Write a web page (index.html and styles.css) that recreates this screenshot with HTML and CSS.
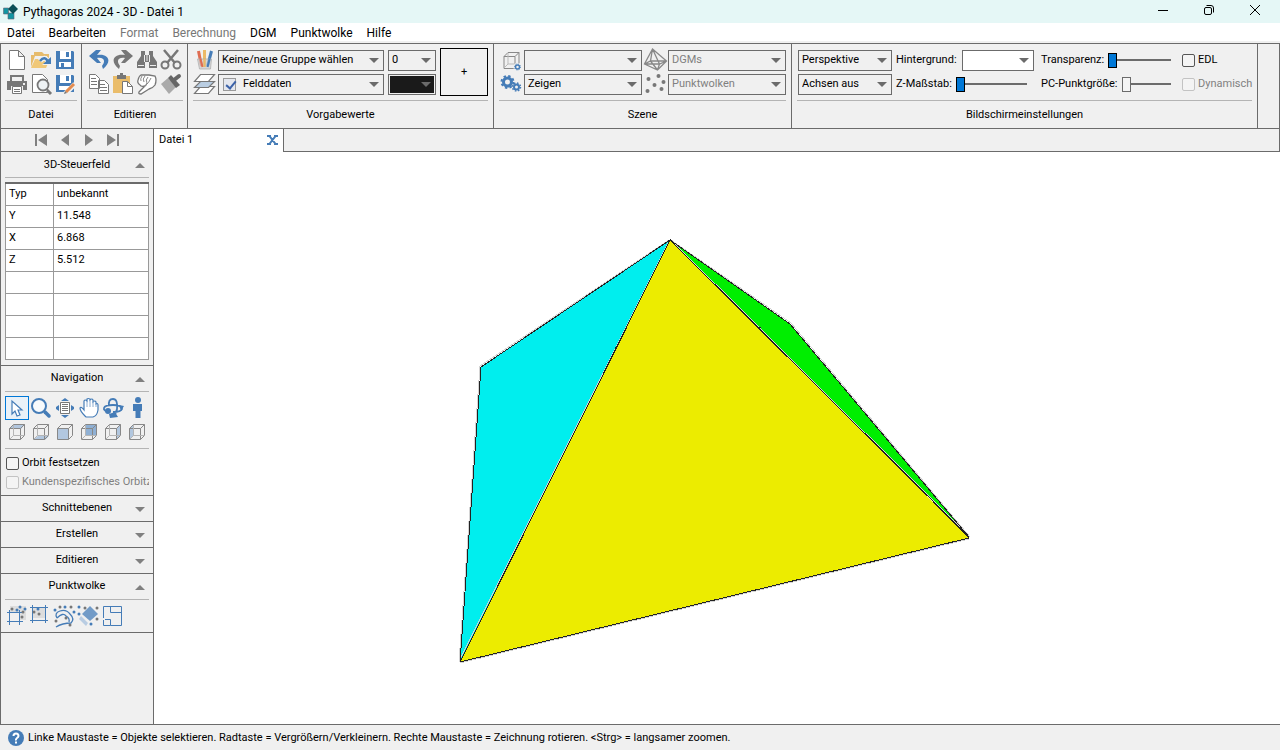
FILE: index.html
```html
<!DOCTYPE html>
<html lang="de">
<head>
<meta charset="utf-8">
<title>Pythagoras 2024 - 3D - Datei 1</title>
<link rel="stylesheet" href="styles.css">
</head>
<body>
<header class="titlebar">
  <svg class="logo" width="16" height="18" viewBox="0 0 16 18"><path fill="#1295a2" stroke="#667" stroke-width=".6" d="M.5 5h5v6h-5zM5 10h6v6H5z"/><path fill="#0a4f57" d="M10 1l5 5-5 5-5-5z"/></svg>
  <h1>Pythagoras 2024 - 3D - Datei 1</h1>
  <div class="winbtns">
    <button aria-label="Minimieren"><svg width="12" height="12" viewBox="0 0 12 12"><path d="M1 6.500h10"/></svg></button>
    <button aria-label="Wiederherstellen"><svg width="12" height="12" viewBox="0 0 12 12"><rect x="1.500" y="3.500" width="7" height="7" rx="1.500"/><path d="M3.500 1.500h4.500q2.500 0 2.500 2.500v4.500"/></svg></button>
    <button aria-label="Schließen"><svg width="12" height="12" viewBox="0 0 12 12"><path d="M1 1l10 10M11 1L1 11"/></svg></button>
  </div>
</header>
<nav class="menu">
  <button>Datei</button><button>Bearbeiten</button><button disabled>Format</button><button disabled>Berechnung</button><button>DGM</button><button>Punktwolke</button><button>Hilfe</button>
</nav>

<section class="ribbon">
  <div class="group">
    <div class="tools three">
      <button aria-label="Neu"><svg viewBox="0 0 24 24"><path fill="#fff" stroke="#777" d="M4.500 2.500h9l6 6v13h-15zM13.500 2.500v6h6"/></svg></button>
      <button aria-label="Öffnen"><svg viewBox="0 0 24 24"><path fill="#e6bb6c" d="M2 19V7h3V4h8l2 2h5v5h-2V8H6z"/><path fill="#f0c878" d="M6 11h15l-4 9H2z"/><path fill="none" stroke="#f0f0f0" stroke-width="5" d="M11 13q5-6 8 1"/><path fill="#f0f0f0" d="M13 17h10V9z"/><path fill="none" stroke="#457cb7" stroke-width="2.500" d="M11 13q5-6 8 1"/><path fill="#457cb7" d="M14 16h8V9z"/></svg></button>
      <button aria-label="Speichern"><svg viewBox="0 0 24 24"><path fill="#457cb7" d="M3 3h17l1 1v17H3z"/><path fill="#fff" d="M7 3h11v8H7zM6 14h12v5H6z"/><path fill="#457cb7" d="M13 4h3v5h-3zM8 15h3v4H8z"/></svg></button>
      <button aria-label="Drucken"><svg viewBox="0 0 24 24"><path fill="#777" d="M5 3h14v6H5zM2 9h20v9h-4v-4H6v4H2z"/><path fill="#fff" stroke="#777" d="M7.500 14.500h9v7h-9z"/><path stroke="#777" d="M9 17.500h6M9 19.500h6"/><path fill="#f0f0f0" d="M7 5h10v4H7zM18 11h2v2h-2z"/></svg></button>
      <button aria-label="Seitenansicht"><svg viewBox="0 0 24 24"><path fill="#fff" stroke="#777" d="M3.500 2.500h10l5 5v13h-15z"/><circle cx="14" cy="13" r="5.500" fill="#eef2f4" stroke="#777" stroke-width="1.800"/><path stroke="#777" stroke-width="3" d="M18 18l4 4"/></svg></button>
      <button aria-label="Speichern unter"><svg viewBox="0 0 24 24"><path fill="#457cb7" d="M3 3h17l1 1v16H3z"/><path fill="#fff" d="M7 3h11v8H7zM6 14h12v4H6z"/><path fill="#457cb7" d="M13 4h3v5h-3z"/><path stroke="#f0f0f0" stroke-width="5" d="M12 22l10-10"/><path stroke="#e38b4f" stroke-width="3" d="M13 20l8-8"/><path fill="#777" d="M11 22l1-3 2 2z"/></svg></button>
    </div>
    <h2>Datei</h2>
  </div>
  <div class="group">
    <div class="tools four">
      <button aria-label="Rückgängig"><svg viewBox="0 0 24 24"><path fill="#457cb7" d="M14 2h-5L2 8l8 7h4l-4-5c7-1 9 3 5 8l1 3c10-8 5-16-6-14z"/></svg></button>
      <button aria-label="Wiederherstellen"><svg viewBox="0 0 24 24"><path fill="#777" d="M10 2h5l7 6-8 7h-4l4-5c-7-1-9 3-5 8l-1 3C-2 13 3 5 14 7z"/></svg></button>
      <button aria-label="Suchen"><svg viewBox="0 0 24 24"><path fill="#777" d="M6 3h4v4h4V3h4v5l4 6v6h-8v-6h-4v6H2v-6l4-6z"/><path stroke="#eee" d="M3 17.500h6M15 17.500h6M12 7v6M9.500 7v7M14.500 7v7"/></svg></button>
      <button aria-label="Ausschneiden"><svg viewBox="0 0 24 24"><g fill="none" stroke="#777" stroke-width="2"><circle cx="6" cy="17" r="3.500"/><circle cx="18" cy="17" r="3.500"/><path stroke-width="2.500" d="M5 2l11 13M19 2L8 15"/></g></svg></button>
      <button aria-label="Kopieren"><svg viewBox="0 0 24 24"><path fill="#fff" stroke="#777" d="M2.500 2.500h6l4 4v10h-10zM11.500 8.500h6l4 4v9h-10z"/><path stroke="#777" d="M4 6.500h5M4 9.500h6M4 12.500h6M13 12.500h5M13 15.500h7M13 18.500h7"/></svg></button>
      <button aria-label="Einfügen"><svg viewBox="0 0 24 24"><path fill="#eabd6b" d="M2 4h17v17H2z"/><path fill="#777" d="M6 3h9v4H6zM9 1h3v3H9z"/><path fill="#fff" stroke="#777" d="M11.500 9.500h5l5 5v7h-10z"/><path fill="none" stroke="#777" d="M16.500 9.500v5h5"/></svg></button>
      <button aria-label="Auswählen"><svg viewBox="0 0 24 24"><path fill="#fff" stroke="#777" stroke-width="1.300" d="M6 3h8l6 1q2 4 0 9-2 3-6 4l-8 5q-3 0-2-2l6-6q-4 1-5-1-3-2-2-5 1-4 3-5z"/><path fill="none" stroke="#888" d="M7 4q-2 3-1 5M10 4q-3 3-1 6M13 5q-3 3-1 6l-2 3M16 6q-2 5-6 8"/></svg></button>
      <button aria-label="Format übertragen"><svg viewBox="0 0 24 24"><path fill="#aaa" d="M2 12l7-6 8 9-7 7z"/><path fill="#666" d="M9 6l3-3 9 10-4 3z"/><path stroke="#666" stroke-width="4" stroke-linecap="round" d="M15 8l5-4"/></svg></button>
    </div>
    <h2>Editieren</h2>
  </div>
  <div class="group">
    <div class="cols">
      <div class="rows">
        <div class="pair"><svg class="ico" viewBox="0 0 24 24"><path stroke="#df6c51" stroke-width="3" d="M5 3l3 15"/><path stroke="#ebb967" stroke-width="3" d="M11 2v17"/><path stroke="#457cb7" stroke-width="3" d="M18 3l-4 15"/><path fill="#ccc" fill-opacity=".7" stroke="#aaa" stroke-width=".7" d="M4 11h14l-1 10H6z"/><path stroke="#df6c51" stroke-width="2" d="M7 11l2 8"/><path stroke="#ebb967" stroke-width="2" d="M11 11v8"/><path stroke="#457cb7" stroke-width="2" d="M16 11l-2 8"/></svg>
          <span class="field grow"><select aria-label="Gruppe"><option>Keine/neue Gruppe wählen</option></select></span></div>
        <div class="pair"><svg class="ico" viewBox="0 0 24 24"><g stroke="#777" stroke-width="1.200"><path fill="#fff" d="M7 14.500h14l-6 7H1z"/><path fill="#b9cde2" d="M7 9.500h14l-6 6H1z"/><path fill="#fff" d="M7 2.500h14l-6 7H1z"/></g></svg>
          <span class="field grow ticked"><input type="checkbox" checked aria-label="Ebene aktiv"><select aria-label="Ebene"><option>Felddaten</option></select></span></div>
      </div>
      <div class="rows small">
        <span class="field"><select aria-label="Nummer"><option>0</option></select></span>
        <span class="field black"><select aria-label="Farbe"><option></option></select></span>
      </div>
      <button class="plus">+</button>
    </div>
    <h2>Vorgabewerte</h2>
  </div>
  <div class="group">
    <div class="cols tight">
      <div class="rows scene">
        <div class="pair"><svg class="ico" viewBox="0 0 24 24"><path fill="none" stroke="#888" d="M4.500 8.500h11v12h-11zM4.500 8.500l4-4h11v11M15.500 8.500l4-4"/><path fill="none" stroke="#bbb" d="M8.500 5v11h11M8.500 16l-4 4"/><circle cx="18" cy="19" r="4" fill="#f0f0f0"/><circle cx="18" cy="19" r="2" fill="none" stroke="#457cb7" stroke-width="1.500"/><circle cx="18" cy="19" r="3" fill="none" stroke="#457cb7" stroke-dasharray="1 1.350"/></svg>
          <span class="field grow"><select aria-label="Szene"><option></option></select></span></div>
        <div class="pair"><svg class="ico" viewBox="0 0 24 24"><g fill="none" stroke="#457cb7"><circle cx="8" cy="10" r="4" stroke-width="3"/><circle cx="8" cy="10" r="6" stroke-width="2" stroke-dasharray="2.400 2.310"/><circle cx="17" cy="15" r="2.500" stroke-width="2"/><circle cx="17" cy="15" r="4" stroke-width="1.500" stroke-dasharray="1.600 1.540"/></g></svg>
          <span class="field grow"><select aria-label="Anzeige"><option>Zeigen</option></select></span></div>
      </div>
      <div class="rows scene">
        <div class="pair"><svg class="ico" viewBox="0 0 24 24"><path fill="none" stroke="#888" stroke-width="1.300" d="M9 1L1 16l13 6 9-9zM9 1L7 13l7 9M1 16l6-3 16 0M9 1l7 15-2 6M1 16h15l7-3"/></svg>
          <span class="field grow"><select aria-label="DGMs" disabled><option>DGMs</option></select></span></div>
        <div class="pair"><svg class="ico" viewBox="0 0 24 24"><g fill="#777"><circle cx="15" cy="4" r="2"/><circle cx="5" cy="7" r="2"/><circle cx="20" cy="10" r="2"/><circle cx="11" cy="13" r="2"/><circle cx="18" cy="17" r="2"/><circle cx="4" cy="19" r="2"/></g></svg>
          <span class="field grow"><select aria-label="Punktwolken" disabled><option>Punktwolken</option></select></span></div>
      </div>
    </div>
    <h2>Szene</h2>
  </div>
  <div class="group">
    <div class="cols screen">
      <div class="rows view">
        <span class="field"><select aria-label="Ansicht"><option>Perspektive</option></select></span>
        <span class="field"><select aria-label="Achsen"><option>Achsen aus</option></select></span>
      </div>
      <div class="rows back">
        <div class="pair"><label for="bg">Hintergrund:</label><span class="field white"><select id="bg"><option></option></select></span></div>
        <div class="pair zrow"><label for="zs">Z-Maßstab:</label><input class="grow" id="zs" type="range" value="0"></div>
      </div>
      <div class="rows trans">
        <div class="pair"><label for="tr">Transparenz:</label><input class="grow" id="tr" type="range" value="0"></div>
        <div class="pair"><label for="pc">PC-Punktgröße:</label><input class="grow" id="pc" type="range" value="0" disabled></div>
      </div>
      <div class="rows checks">
        <label class="check"><input type="checkbox">EDL</label>
        <label class="check off"><input type="checkbox" disabled>Dynamisch</label>
      </div>
    </div>
    <h2>Bildschirmeinstellungen</h2>
  </div>
</section>

<div class="body">
  <aside>
    <div class="steps">
      <button aria-label="Anfang"><svg viewBox="0 0 14 12"><path d="M1 0h2v12H1zM13 0v12L4 6z"/></svg></button>
      <button aria-label="Zurück"><svg viewBox="0 0 14 12"><path d="M11 0v12L3 6z"/></svg></button>
      <button aria-label="Weiter"><svg viewBox="0 0 14 12"><path d="M3 0v12l8-6z"/></svg></button>
      <button aria-label="Ende"><svg viewBox="0 0 14 12"><path d="M11 0h2v12h-2zM1 0v12l9-6z"/></svg></button>
    </div>
    <section class="panel">
      <button class="head up">3D-Steuerfeld</button>
      <div class="inner data">
        <table>
          <tr><th>Typ</th><td>unbekannt</td></tr>
          <tr><th>Y</th><td>11.548</td></tr>
          <tr><th>X</th><td>6.868</td></tr>
          <tr><th>Z</th><td>5.512</td></tr>
          <tr><th></th><td></td></tr>
          <tr><th></th><td></td></tr>
          <tr><th></th><td></td></tr>
          <tr><th></th><td></td></tr>
        </table>
      </div>
    </section>
    <section class="panel">
      <button class="head up">Navigation</button>
      <div class="inner nav">
        <div class="tools six">
          <button class="active" aria-label="Auswahl"><svg viewBox="0 0 24 24"><path fill="#fff" stroke="#457cb7" stroke-width="1.200" d="M7 5v13l3-3 2 5 3-1-2-5h4z"/></svg></button>
          <button aria-label="Zoom"><svg viewBox="0 0 24 24"><circle cx="10" cy="10" r="7" fill="#f7fafc" stroke="#457cb7" stroke-width="2"/><path stroke="#457cb7" stroke-width="3.500" stroke-linecap="round" d="M16 16l4 4"/></svg></button>
          <button aria-label="Alles anzeigen"><svg viewBox="0 0 24 24"><path fill="#fff" stroke="#777" d="M7.500 6.500h9v11h-9z"/><path stroke="#777" d="M9 8.500h6M9 10.500h6M9 12.500h6M9 14.500h6"/><path fill="#457cb7" d="M8 5l4-3 4 3zM8 19l4 3 4-3zM6 9v6l-3-2v-2zM18 9v6l3-2v-2z"/></svg></button>
          <button aria-label="Verschieben"><svg viewBox="0 0 24 24"><path fill="#fff" stroke="#457cb7" stroke-width="1.200" d="M8 20q-5-5-5-8 1-2 4 2V5q1-2 3 0V3q1-1 3 0v1q2-2 3 0v2q2-2 3 0v2q2-1 2 1v5q-1 6-5 7H9z"/><path fill="none" stroke="#8cacd0" d="M10 5v6M13 4v7M16 5v6M19 8v3"/></svg></button>
          <button aria-label="Orbit"><svg viewBox="0 0 24 24"><g fill="none" stroke="#457cb7" stroke-width="1.800"><path d="M8 10q-1-7 4-7t4 10q-1 5-4 7M9 16q-7-1-6-4t9-3q9 0 9 4-1 3-9 3"/></g><circle cx="7" cy="15" r="3" fill="#457cb7"/><path fill="#457cb7" d="M8 18l6-2 3 5-8 1zM18 9l5 1-3 5z"/></svg></button>
          <button aria-label="Gehen"><svg viewBox="0 0 24 24"><circle cx="13" cy="4" r="3" fill="#457cb7"/><path fill="#457cb7" d="M8 8h9v7h-1.500v7h-5v-7H8z"/></svg></button>
          <button aria-label="Oben"><svg viewBox="0 0 24 24"><path fill="#b2c7df" d="M4 9l5-5h11l-4 5z"/><path class="cube" d="M4.500 8.500h11v11h-11zM4.500 8.500l4-4h11v11l-4 4M15.500 8.500l4-4"/><path class="edge" d="M8.500 5v10.500h11M8.500 15.500l-4 4"/></svg></button>
          <button aria-label="Unten"><svg viewBox="0 0 24 24"><path fill="#b2c7df" d="M4 20l5-4h11l-4 4z"/><path class="cube" d="M4.500 8.500h11v11h-11zM4.500 8.500l4-4h11v11l-4 4M15.500 8.500l4-4"/><path class="edge" d="M8.500 5v10.500h11M8.500 15.500l-4 4"/></svg></button>
          <button aria-label="Vorne"><svg viewBox="0 0 24 24"><path fill="#b2c7df" d="M4.500 8.500h11v11h-11z"/><path class="cube" d="M4.500 8.500h11v11h-11zM4.500 8.500l4-4h11v11l-4 4M15.500 8.500l4-4"/></svg></button>
          <button aria-label="Hinten"><svg viewBox="0 0 24 24"><path fill="#8fb0d4" d="M8.500 4.500h11v11h-11z"/><path class="cube" d="M4.500 8.500h11v11h-11zM4.500 8.500l4-4h11v11l-4 4M15.500 8.500l4-4"/><path class="edge" d="M8.500 5v10.500h11M8.500 15.500l-4 4"/></svg></button>
          <button aria-label="Rechts"><svg viewBox="0 0 24 24"><path fill="#b2c7df" d="M15.500 8.500l4-4v11l-4 4z"/><path class="cube" d="M4.500 8.500h11v11h-11zM4.500 8.500l4-4h11v11l-4 4M15.500 8.500l4-4"/><path class="edge" d="M8.500 5v10.500h11M8.500 15.500l-4 4"/></svg></button>
          <button aria-label="Links"><svg viewBox="0 0 24 24"><path fill="#b2c7df" d="M4.500 8.500l4-4v11l-4 4z"/><path class="cube" d="M4.500 8.500h11v11h-11zM4.500 8.500l4-4h11v11l-4 4M15.500 8.500l4-4"/><path class="edge" d="M8.500 5v10.500h11M8.500 15.500l-4 4"/></svg></button>
        </div>
        <div class="orbit">
          <label class="check"><input type="checkbox">Orbit festsetzen</label>
          <label class="check off"><input type="checkbox" disabled>Kundenspezifisches Orbitzentrum</label>
        </div>
      </div>
    </section>
    <section class="panel"><button class="head down">Schnittebenen</button></section>
    <section class="panel"><button class="head down">Erstellen</button></section>
    <section class="panel"><button class="head down">Editieren</button></section>
    <section class="panel">
      <button class="head up">Punktwolke</button>
      <div class="inner">
        <div class="tools six">
          <button aria-label="Ausschnitt innen"><svg viewBox="0 0 24 24"><path fill="#ddd" d="M5 2h16v14H5z"/><path fill="#f0f0f0" d="M5 8h10v9H5z"/><path fill="none" stroke="#457cb7" d="M4.500 6v15M14.500 6v15M2 8.500h16M2 17.500h16"/><g fill="#777"><circle cx="7" cy="5" r="1.500"/><circle cx="17" cy="13" r="1.500"/><circle cx="18" cy="8" r="1.500"/></g><g fill="#457cb7"><circle cx="15" cy="3" r="1.500"/><circle cx="20" cy="5" r="1.500"/><circle cx="12" cy="6" r="1.500"/></g></svg></button>
          <button aria-label="Ausschnitt außen"><svg viewBox="0 0 24 24"><path fill="#ddd" d="M4 4h12v10H4z"/><path fill="none" stroke="#457cb7" d="M3.500 1v18M16.500 1v18M1 3.500h18M1 16.500h18"/><g fill="#777"><circle cx="5" cy="8" r="1.500"/><circle cx="10" cy="10" r="1.500"/></g><circle cx="9" cy="5" r="1.500" fill="#457cb7"/></svg></button>
          <button aria-label="Linie"><svg viewBox="0 0 24 24"><path fill="none" stroke="#457cb7" stroke-width="1.300" d="M4 14Q1 9 7 7t10 3q5 5 1 9-4 0-8 1t-7 3M4 14q6-6 9-2 4 2 3 6"/><g fill="#777"><circle cx="7" cy="3" r="1.500"/><circle cx="18" cy="3" r="1.500"/><circle cx="3" cy="17" r="1.500"/><circle cx="13" cy="14" r="1.500"/><circle cx="17" cy="21" r="1.500"/></g><g fill="#457cb7"><circle cx="12" cy="3" r="1.500"/><circle cx="2" cy="6" r="1.500"/><circle cx="21" cy="8" r="1.500"/></g></svg></button>
          <button aria-label="Löschen"><svg viewBox="0 0 24 24"><path fill="#729bc7" d="M13 2l8 8-8 7-8-7z"/><path fill="#b8cce2" d="M4 12l7 7-2 3-7-7z"/><g fill="#777"><circle cx="8" cy="4" r="1.500"/><circle cx="20" cy="4" r="1.500"/><circle cx="20" cy="15" r="1.500"/></g><g fill="#457cb7"><circle cx="2" cy="3" r="1.500"/><circle cx="2" cy="10" r="1.500"/><circle cx="14" cy="20" r="1.500"/></g></svg></button>
          <button aria-label="Fenster"><svg viewBox="0 0 24 24"><path fill="none" stroke="#457cb7" d="M2.500 14V2.500h18v19h-11v-6M9.500 8.500h11M9.500 2.500v6M4 15.500h5.500M2.500 16v5.500h7"/></svg></button>
        </div>
      </div>
    </section>
  </aside>
  <main>
    <div class="tabs"><div class="tab"><span>Datei 1</span><button aria-label="Tab schließen"><svg width="11" height="10" viewBox="0 0 11 10"><path stroke="#457cb7" stroke-width="2" d="M2 .5l7 9M9 .5l-7 9M0 1h4M7 1h4M0 9h4M7 9h4"/></svg></button></div><div class="rest"></div></div>
    <svg class="scene3d" viewBox="154 152 1126 572" preserveAspectRatio="xMinYMin meet" role="img" aria-label="Pyramide">
      <path fill="#00eeee" d="M670 240L481 367 460 662z"/>
      <path fill="#00ee00" d="M670 240L790 324 969 537z"/>
      <path fill="#ecec00" d="M670 240L969 538 460 662z"/>
      <g class="halo"><path d="M669 240L480 366 459 662M671 240L791 323 970 537M460 663L969 539M671 240L970 537M669 241L459 661"/></g>
      <g class="outline"><path d="M670 240L481 367 460 662zM670 240L790 324 969 537zM969 538L460 662M766 336L787 357M919 487L969 538M615 349l2-3M758 327h3"/></g>
    </svg>
  </main>
</div>
<footer><svg width="16" height="16" viewBox="0 0 16 16"><circle cx="8" cy="8" r="8" fill="#457cb7"/><path fill="none" stroke="#fff" stroke-width="2" d="M5.500 6q0-2.500 2.500-2.500T10.500 6Q10.500 7 9 8T8 10.500M8 11.500v2"/></svg><span>Linke Maustaste = Objekte selektieren. Radtaste = Vergrößern/Verkleinern. Rechte Maustaste = Zeichnung rotieren. &lt;Strg&gt; = langsamer zoomen.</span></footer>
</body>
</html>
```
FILE: styles.css
```css
* { box-sizing: border-box; }
body {
  margin: 0;
  min-height: 100vh;
  display: flex;
  flex-direction: column;
  background: #f0f0f0;
  color: #000;
  font: 11px/14px Roboto, "Liberation Sans", sans-serif;
  overflow: hidden;
}
button, select, input { font: inherit; color: inherit; margin: 0; }
button { background: none; border: 0; padding: 0; }
h1, h2 { margin: 0; font-size: inherit; font-weight: 400; }
svg { display: block; }

.titlebar { display: flex; align-items: center; height: 23px; padding-left: 3px; background: #e5f7f6; }
.titlebar h1 { margin-left: 4px; font: 12px/16px Roboto, sans-serif; flex: 1; }
.winbtns { display: flex; align-self: flex-start; }
.winbtns button { width: 46px; height: 20px; display: grid; place-items: center; }
.winbtns svg { fill: none; stroke: #000; }
.winbtns button:last-child { margin-right: 2px; }

.menu { display: flex; gap: 14px; height: 18px; padding-left: 7px; background: #fff; }
.menu button { font: 12px/20px Roboto, sans-serif; }
.menu button:disabled { color: #777; }

.ribbon { display: flex; margin-top: 2px; border: 1px solid #6b6b6b; }
.group { padding: 4px; border-right: 1px solid #6b6b6b; }
.group + .group { padding-left: 5px; }
.group + .group + .group { padding-right: 5px; }
.group h2 { margin-top: 4px; padding: 6px 0 2px; border-top: 1px solid #b4b4b4; text-align: center; line-height: 15px; }
.tools { display: grid; }
.tools svg { width: 24px; height: 24px; }
.three { grid-template-columns: repeat(3, 24px); }
.four { grid-template-columns: repeat(4, 24px); }
.six { grid-template-columns: repeat(6, 24px); }
.ico { width: 25px; height: 24px; flex: none; }
.cols { display: flex; gap: 4px; }
.tight { gap: 1px; }
.rows { display: grid; grid-template: 24px 24px / minmax(0, 1fr); align-items: center; width: 191px; }
.rows.small { width: 48px; }
.rows.scene { width: 143px; }
.rows.view { width: 94px; }
.rows.back { width: 138px; }
.rows.trans { width: 130px; margin-left: 3px; }
.rows.checks { width: 70px; margin-left: 7px; }
.screen { padding-left: 1px; }
.pair { display: flex; align-items: center; }
.pair label { white-space: nowrap; }
.grow { flex: 1; min-width: 0; }
.zrow { padding-right: 7px; }
.back .pair { justify-content: space-between; }

.field { display: block; position: relative; height: 21px; border: 1px solid #6b6b6b; }
.field select { display: block; width: 100%; height: 100%; padding: 0 16px 0 3px; border: 0; border-radius: 0; background: none; appearance: none; opacity: 1; }
.field select:disabled { color: #808080; }
.field::after { content: ""; position: absolute; right: 4px; top: 7px; border: 5px solid transparent; border-top-color: #6b6b6b; border-bottom: 0; pointer-events: none; }
.white { width: 72px; background: #fff; }
.black { background: #1a1a1a; box-shadow: inset 0 0 0 1px #f0f0f0; }
.ticked input { position: absolute; left: 4px; top: 3px; }
.ticked select { padding-left: 24px; }
.plus { width: 48px; height: 48px; border: 1px solid #000; }

input[type="checkbox"] { appearance: none; width: 13px; height: 13px; border: 1px solid #555; border-radius: 2px; background: #f4f4f4; flex: none; }
input[type="checkbox"]:disabled { border-color: #c3c3c3; }
input[type="checkbox"]:checked { border-radius: 0; border-color: #999; background: #e4e7ee; }
input[type="checkbox"]:checked::after { content: ""; display: block; width: 4px; height: 8px; margin: 0 0 0 4px; border: solid #3c62a8; border-width: 0 2px 2px 0; transform: rotate(40deg); }
.check { display: flex; align-items: center; gap: 3px; white-space: nowrap; }
.off { color: #808080; }

input[type="range"] { appearance: none; height: 16px; margin-left: 4px; background: linear-gradient(#6b6b6b, #6b6b6b) 0 7px / 100% 2px no-repeat; }
input[type="range"]::-webkit-slider-thumb { appearance: none; width: 9px; height: 15px; border: 1px solid #000; background: #0078d7; }
input[type="range"]:disabled::-webkit-slider-thumb { border-color: #6b6b6b; background: #f4f4f4; }

.body { display: flex; flex: 1; }
aside { width: 154px; flex: none; border: solid #6b6b6b; border-width: 0 1px; }
.steps { display: flex; justify-content: center; gap: 10px; height: 23px; align-items: center; border-bottom: 1px solid #6b6b6b; }
.steps svg { width: 14px; height: 12px; fill: #808080; }
.panel { border-bottom: 1px solid #6b6b6b; }
.head { display: block; position: relative; width: 100%; height: 25px; }
.head::after { content: ""; position: absolute; right: 8px; top: 11px; border: 5px solid transparent; }
.up::after { border-bottom-color: #808080; border-top: 0; }
.down::after { border-top-color: #808080; border-bottom: 0; }
.inner { margin: 0 4px; padding: 4px 0; border-top: 1px solid #b4b4b4; }
.data { padding-bottom: 5px; }
.nav { padding-bottom: 1px; }
table { width: 144px; border-collapse: collapse; table-layout: fixed; background: #fff; border-top: 2px solid #6b6b6b; }
th, td { height: 22px; padding: 0 3px; border: 1px solid #999; font-weight: 400; text-align: left; }
th { width: 48px; }
.active { outline: 1px solid #0078d7; outline-offset: -1px; background: #e9f1f8; }
.cube, .edge { fill: none; stroke: #888; }
.edge { stroke: #b5b5b5; }
.orbit { margin-top: 4px; padding: 5px 0 2px 1px; border-top: 1px solid #b4b4b4; overflow: hidden; }
.orbit .check { height: 19px; }

main { flex: 1; display: flex; flex-direction: column; background: #fff; }
.tabs { display: flex; height: 23px; }
.tab { display: flex; align-items: center; justify-content: space-between; width: 130px; padding: 0 5px 1px 5px; border-right: 1px solid #6b6b6b; }
.rest { flex: 1; background: #f0f0f0; border: solid #6b6b6b; border-width: 0 1px 1px 0; }
.scene3d { width: 100%; flex: 1; min-height: 0; }
.halo { fill: none; stroke: #d4d4d4; shape-rendering: crispEdges; }
.outline { fill: none; stroke: #222; shape-rendering: crispEdges; }

footer { display: flex; align-items: center; gap: 4px; height: 26px; padding: 0 8px; border-top: 1px solid #6b6b6b; white-space: nowrap; }
```
